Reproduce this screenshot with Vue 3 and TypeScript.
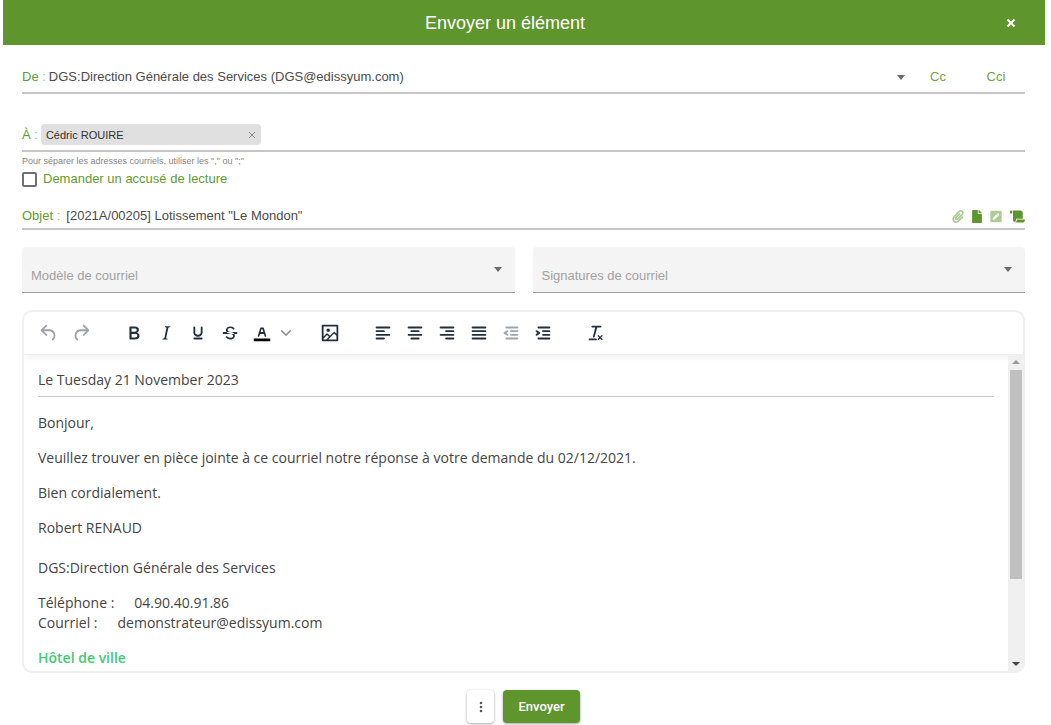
<script setup lang="ts">
import { ref } from 'vue'

interface Tool {
  name: string
  label: string
  path: string
  muted?: boolean
  split?: boolean
}

interface Template {
  id: string
  label: string
}

const bar = (y: number, x: number, end: number): string =>
  `M${x} ${y}H${end}a1 1 0 0 1 0 2H${x}a1 1 0 0 1 0-2Z`

const toolGroups: Tool[][] = [
  [
    {
      name: 'undo',
      label: 'Annuler',
      muted: true,
      path: 'M6.4 8H12c3.7 0 6.2 2 6.8 5.1.6 2.7-.4 5.6-2.3 6.8a1 1 0 0 1-1-1.8c1.1-.6 1.8-2.7 1.4-4.6-.5-2.1-2.1-3.5-4.9-3.5H6.4l3.3 3.3a1 1 0 1 1-1.4 1.4l-5-5a1 1 0 0 1 0-1.4l5-5a1 1 0 0 1 1.4 1.4L6.4 8Z',
    },
    {
      name: 'redo',
      label: 'Rétablir',
      muted: true,
      path: 'M17.6 10H12c-2.8 0-4.4 1.4-4.9 3.5-.4 2 .3 4 1.4 4.6a1 1 0 1 1-1 1.8c-2-1.2-2.9-4.1-2.3-6.8.6-3 3-5.1 6.8-5.1h5.6l-3.3-3.3a1 1 0 1 1 1.4-1.4l5 5a1 1 0 0 1 0 1.4l-5 5a1 1 0 0 1-1.4-1.4l3.3-3.3Z',
    },
  ],
  [
    {
      name: 'bold',
      label: 'Gras',
      path: 'M7.8 19c-.3 0-.5 0-.6-.2l-.2-.5V5.7c0-.2 0-.4.2-.5l.6-.2h5c1.5 0 2.7.3 3.5 1 .7.6 1.1 1.4 1.1 2.5a3 3 0 0 1-.6 1.9c-.4.6-1 1-1.6 1.2.4.1.9.3 1.3.6s.8.7 1 1.2c.4.4.5 1 .5 1.6 0 1.3-.4 2.3-1.3 3-.8.7-2.1 1-3.8 1H7.8Zm5-8.3c.6 0 1.2-.1 1.6-.5.4-.3.6-.7.6-1.3 0-1.1-.8-1.7-2.3-1.7H9.3v3.5h3.4Zm.5 6c.7 0 1.3-.1 1.7-.4.4-.4.6-.9.6-1.5s-.2-1-.7-1.4c-.4-.3-1-.4-2-.4H9.4v3.8h4Z',
    },
    {
      name: 'italic',
      label: 'Italique',
      path: 'm16.7 4.7-.1.9h-.3c-.6 0-1 0-1.4.3-.3.3-.4.6-.5 1.1l-2.1 9.8v.6c0 .5.4.8 1.4.8h.2l-.2.8H8l.2-.8h.2c1.1 0 1.8-.5 2-1.5l2-9.8.1-.5c0-.6-.4-.8-1.4-.8h-.3l.2-.9h5.8Z',
    },
    {
      name: 'underline',
      label: 'Souligné',
      path: 'M16 5c.6 0 1 .4 1 1v5.5a4 4 0 0 1-.4 1.8l-1 1.4a5.3 5.3 0 0 1-5.5 1 5 5 0 0 1-1.6-1c-.5-.4-.8-.9-1.1-1.4a4 4 0 0 1-.4-1.8V6c0-.6.4-1 1-1s1 .4 1 1v5.5c0 .3 0 .6.2 1l.6.7a3.3 3.3 0 0 0 2.2.8 3.4 3.4 0 0 0 2.2-.8c.3-.2.4-.5.6-.8l.2-.9V6c0-.6.4-1 1-1ZM8 17h8c.6 0 1 .4 1 1s-.4 1-1 1H8a1 1 0 0 1 0-2Z',
    },
    {
      name: 'strike',
      label: 'Barré',
      path: 'M15.6 8.5c-.5-.7-1-1.1-1.3-1.3-.6-.4-1.3-.6-2-.6-2.7 0-2.8 1.7-2.8 2.1 0 1.6 1.8 2 3.2 2.3 4.4.9 4.6 2.8 4.6 3.9 0 1.4-.7 4.1-5 4.1A6.2 6.2 0 0 1 7 16.4l1.5-1.1c.4.6 1.6 2 3.7 2 1.6 0 2.5-.4 3-1.2.4-.8.3-2-.8-2.6-.7-.4-1.6-.7-2.9-1-1-.2-3.9-.8-3.9-3.6C7.6 6 10.3 5 12.4 5c2.9 0 4.2 1.6 4.7 2.4l-1.5 1.1Z M5 11h14a1 1 0 0 1 0 2H5a1 1 0 0 1 0-2Z',
    },
    {
      name: 'color',
      label: 'Couleur du texte',
      split: true,
      path: 'M8.7 16h-.8a.5.5 0 0 1-.5-.6l2.7-9c.1-.3.3-.4.5-.4h2.8c.2 0 .4.1.5.4l2.7 9a.5.5 0 0 1-.5.6h-.8a.5.5 0 0 1-.4-.4l-.7-2.2c0-.3-.3-.4-.5-.4h-3.4c-.2 0-.4.1-.5.4l-.7 2.2c0 .3-.2.4-.4.4Zm2.6-7.6-.6 2a.5.5 0 0 0 .5.6h1.6a.5.5 0 0 0 .5-.6l-.6-2c0-.3-.3-.4-.5-.4h-.4c-.2 0-.4.1-.5.4Z',
    },
  ],
  [
    {
      name: 'image',
      label: 'Insérer une image',
      path: 'm5 15.7 3.3-3.2c.3-.3.7-.3 1 0L12 15l4.1-4c.3-.4.8-.4 1 0l2 1.9V5H5v10.7ZM5 18V19h3l2.8-2.9-2-2L5 17.9Zm14-3-2.5-2.4-6.4 6.5H19v-4ZM4 3h16c.6 0 1 .4 1 1v16c0 .6-.4 1-1 1H4a1 1 0 0 1-1-1V4c0-.6.4-1 1-1Zm6 8a2 2 0 1 0 0-4 2 2 0 0 0 0 4Z',
    },
  ],
  [
    { name: 'left', label: 'Aligner à gauche', path: bar(5, 5, 19) + bar(9, 5, 13) + bar(13, 5, 19) + bar(17, 5, 13) },
    { name: 'center', label: 'Centrer', path: bar(5, 5, 19) + bar(9, 8, 16) + bar(13, 5, 19) + bar(17, 8, 16) },
    { name: 'right', label: 'Aligner à droite', path: bar(5, 5, 19) + bar(9, 11, 19) + bar(13, 5, 19) + bar(17, 11, 19) },
    { name: 'justify', label: 'Justifier', path: bar(5, 5, 19) + bar(9, 5, 19) + bar(13, 5, 19) + bar(17, 5, 19) },
    {
      name: 'outdent',
      label: 'Diminuer le retrait',
      muted: true,
      path: bar(5, 7, 19) + bar(9, 12, 19) + bar(13, 12, 19) + bar(17, 7, 19) + 'M8.6 13.2a1 1 0 0 1-1.2 1.6l-3-2a1 1 0 0 1 0-1.6l3-2a1 1 0 0 1 1.2 1.6L6.8 12l1.8 1.2Z',
    },
    {
      name: 'indent',
      label: 'Augmenter le retrait',
      path: bar(5, 7, 19) + bar(9, 12, 19) + bar(13, 12, 19) + bar(17, 7, 19) + 'M4.4 13.2 6.2 12l-1.8-1.2a1 1 0 0 1 1.2-1.6l3 2a1 1 0 0 1 0 1.6l-3 2a1 1 0 1 1-1.2-1.6Z',
    },
  ],
  [
    {
      name: 'clear',
      label: 'Effacer la mise en forme',
      path: 'M13.2 6a1 1 0 0 1 0 .2l-2.6 10a1 1 0 0 1-1 .8h-.2a.8.8 0 0 1-.8-1l2.6-10H8a1 1 0 1 1 0-2h9a1 1 0 0 1 0 2h-3.8ZM5 18h7a1 1 0 0 1 0 2H5a1 1 0 0 1 0-2Zm13 1.5L16.5 18 15 19.5a.7.7 0 0 1-1-1l1.5-1.5-1.5-1.5a.7.7 0 0 1 1-1l1.5 1.5 1.5-1.5a.7.7 0 0 1 1 1L17.5 17l1.5 1.5a.7.7 0 0 1-1 1Z',
    },
  ],
]

const attachments = [
  {
    label: 'Joindre un fichier',
    box: '0 0 448 512',
    width: 12,
    muted: true,
    path: 'M43.246 466.142c-58.43-60.289-57.341-157.511 1.386-217.581L254.392 34c44.316-45.332 116.351-45.336 160.671 0 43.89 44.894 43.943 117.329 0 162.276L232.214 383.128c-29.855 30.537-78.633 30.111-107.982-.998-28.275-29.97-27.368-77.473 1.452-106.953l143.743-146.835c6.182-6.314 16.312-6.422 22.626-.241l22.861 22.379c6.315 6.182 6.422 16.312.241 22.626L171.427 319.927c-4.932 5.045-5.236 13.428-.648 18.292 4.372 4.634 11.245 4.711 15.688.165l182.849-186.851c19.613-20.062 19.613-52.725-.011-72.798-19.189-19.627-49.957-19.637-69.154 0L90.39 293.295c-34.763 35.56-35.299 93.12-1.191 128.313 34.01 35.093 88.985 35.137 123.058.286l172.06-175.999c6.177-6.319 16.307-6.433 22.626-.256l22.877 22.364c6.319 6.177 6.434 16.307.256 22.626l-172.06 175.998c-59.576 60.938-155.943 60.216-214.77-.485z',
  },
  {
    label: 'Document principal',
    box: '0 0 384 512',
    width: 10,
    muted: false,
    path: 'M224 136V0H24C10.7 0 0 10.7 0 24v464c0 13.3 10.7 24 24 24h336c13.3 0 24-10.7 24-24V160H248c-13.2 0-24-10.8-24-24zm160-14.1v6.1H256V0h6.1c6.4 0 12.5 2.5 17 7l97.9 98c4.5 4.5 7 10.6 7 16.9z',
  },
  {
    label: 'Notes',
    box: '0 0 448 512',
    width: 12,
    muted: true,
    path: 'M400 480H48c-26.5 0-48-21.5-48-48V80c0-26.5 21.5-48 48-48h352c26.5 0 48 21.5 48 48v352c0 26.5-21.5 48-48 48zM238.1 177.9L102.4 313.6l-6.3 57.1c-.8 7.6 5.6 14.1 13.3 13.3l57.1-6.3L302.2 242c2.3-2.3 2.3-6.1 0-8.5L246.7 178c-2.5-2.4-6.3-2.4-8.6-.1zM345 165.1L314.9 135c-9.4-9.4-24.6-9.4-33.9 0l-23.1 23.1c-2.3 2.3-2.3 6.1 0 8.5l55.5 55.5c2.3 2.3 6.1 2.3 8.5 0L345 199c9.3-9.3 9.3-24.5 0-33.9z',
  },
  {
    label: 'Bordereau',
    box: '0 0 640 512',
    width: 15,
    muted: false,
    path: 'M48 0C21.53 0 0 21.53 0 48v64c0 8.84 7.16 16 16 16h80V48C96 21.53 74.47 0 48 0zm208 412.57V352h288V96c0-52.94-43.06-96-96-96H111.59C121.74 13.41 128 29.92 128 48v368c0 38.87 34.65 69.65 74.75 63.12C234.22 474 256 444.46 256 412.57zM288 384v32c0 52.93-43.06 96-96 96h336c61.86 0 112-50.14 112-112 0-8.84-7.16-16-16-16H288z',
  },
]

const templates: Template[] = [
  { id: 'model', label: 'Modèle de courriel' },
  { id: 'signature', label: 'Signatures de courriel' },
]

const recipients = ref<string[]>(['Cédric ROUIRE'])
const subject = ref('[2021A/00205] Lotissement "Le Mondon"')
const receipt = ref(false)

const removeRecipient = (index: number): void => {
  recipients.value.splice(index, 1)
}
</script>

<template>
  <main class="dialog">
    <header class="title-bar">
      <h1>Envoyer un élément</h1>
      <button type="button" class="close" aria-label="Fermer">
        <svg viewBox="0 0 10 10" width="10" height="10"><path d="M1.5 1.5l7 7M8.5 1.5l-7 7" /></svg>
      </button>
    </header>

    <form class="content" @submit.prevent>
      <div class="field from">
        <label for="sender">De<span class="colon"> :</span></label>
        <select id="sender">
          <option>DGS:Direction Générale des Services (DGS@edissyum.com)</option>
        </select>
        <svg class="arrow" viewBox="0 0 10 5" width="10" height="5"><path d="M1 0h8L5 5z" /></svg>
        <button type="button" class="copy">Cc</button>
        <button type="button" class="copy">Cci</button>
      </div>

      <div class="field to">
        <label for="recipient">À<span class="colon"> :</span></label>
        <span v-for="(name, i) in recipients" :key="name" class="chip">
          {{ name }}
          <button type="button" :aria-label="`Retirer ${name}`" @click="removeRecipient(i)">
            <svg viewBox="0 0 8 8" width="8" height="8"><path d="M1 1l6 6M7 1 1 7" /></svg>
          </button>
        </span>
        <input id="recipient" type="text" />
      </div>
      <p class="hint">Pour séparer les adresses courriels, utiliser les "," ou ";"</p>

      <label class="receipt">
        <input v-model="receipt" type="checkbox" />
        Demander un accusé de lecture
      </label>

      <div class="field subject">
        <label for="subject">Objet<span class="colon"> :</span></label>
        <input id="subject" v-model="subject" type="text" />
        <div class="attachments">
          <button v-for="a in attachments" :key="a.label" type="button" :aria-label="a.label" :class="{ muted: a.muted }">
            <svg :viewBox="a.box" :width="a.width" height="13"><path :d="a.path" /></svg>
          </button>
        </div>
      </div>

      <div class="templates">
        <div v-for="t in templates" :key="t.id" class="template">
          <select :id="t.id" :aria-label="t.label">
            <option>{{ t.label }}</option>
          </select>
          <svg class="arrow" viewBox="0 0 10 5" width="10" height="5"><path d="M1 0h8L5 5z" /></svg>
        </div>
      </div>

      <section class="editor">
        <div class="toolbar" role="toolbar" aria-label="Mise en forme">
          <div v-for="(group, g) in toolGroups" :key="g" class="group">
            <template v-for="tool in group" :key="tool.name">
              <button type="button" class="tool" :class="{ muted: tool.muted }" :aria-label="tool.label">
                <svg viewBox="0 0 24 24" width="22" height="22">
                  <path :d="tool.path" fill-rule="evenodd" />
                  <path v-if="tool.split" class="swatch" d="M3 18h18v3H3z" />
                </svg>
              </button>
              <button v-if="tool.split" type="button" class="more-colors" aria-label="Choisir une couleur">
                <svg viewBox="0 0 10 10" width="10" height="10">
                  <path d="M8.7 2.2c.3-.3.8-.3 1 0 .4.4.4.9 0 1.2L5.7 7.8c-.3.3-.9.3-1.2 0L.2 3.4a.8.8 0 0 1 0-1.2c.3-.3.8-.3 1.1 0L5 6l3.7-3.8Z" />
                </svg>
              </button>
            </template>
          </div>
        </div>

        <div class="workspace">
          <article class="letter" contenteditable="true" spellcheck="false" role="textbox" aria-multiline="true" aria-label="Message">
            <p class="date">Le Tuesday 21 November 2023</p>
            <hr />
            <p>Bonjour,</p>
            <p>Veuillez trouver en pièce jointe à ce courriel notre réponse à votre demande du 02/12/2021.</p>
            <p>Bien cordialement.</p>
            <p class="signer">Robert RENAUD</p>
            <p>DGS:Direction Générale des Services</p>
            <p>
              Téléphone :<span class="value">04.90.40.91.86</span><br />
              Courriel :<span class="value">demonstrateur@edissyum.com</span>
            </p>
            <p class="place">Hôtel de ville</p>
          </article>
          <div class="scrollbar" aria-hidden="true">
            <svg class="up" viewBox="0 0 8 4" width="8" height="4"><path d="M0 4h8L4 0z" /></svg>
            <div class="track"><div class="thumb"></div></div>
            <svg class="down" viewBox="0 0 8 4" width="8" height="4"><path d="M0 0h8L4 4z" /></svg>
          </div>
        </div>
      </section>

      <footer class="actions">
        <button type="button" class="menu" aria-label="Plus d'options">
          <svg viewBox="0 0 4 12" width="4" height="12">
            <circle cx="2" cy="2" r="1.3" /><circle cx="2" cy="6" r="1.3" /><circle cx="2" cy="10" r="1.3" />
          </svg>
        </button>
        <button type="submit" class="send">Envoyer</button>
      </footer>
    </form>
  </main>
</template>

<style>
body {
  background: #fff;
}
</style>

<style scoped>
* {
  box-sizing: border-box;
}

.dialog {
  display: flex;
  flex-direction: column;
  height: 100vh;
  min-height: 560px;
  overflow: hidden;
  font: 13px/20px "Liberation Sans", Arial, sans-serif;
  color: #4a4a4a;
}

button,
input,
select {
  font: inherit;
  color: inherit;
  border: 0;
  padding: 0;
  margin: 0;
  background: none;
  outline: 0;
}

button {
  cursor: pointer;
}

svg {
  display: block;
  fill: currentColor;
}

.title-bar {
  display: grid;
  grid-template-columns: 80px 1fr 80px;
  align-items: center;
  flex: none;
  height: 45px;
  margin: 0 6px 0 3px;
  background: #5e962d;
  color: #fff;
}

.title-bar h1 {
  grid-column: 2;
  margin: 0;
  padding-right: 38px;
  text-align: center;
  font-size: 18px;
  line-height: 24px;
  font-weight: 400;
}

.close {
  justify-self: end;
  margin-right: 29px;
}

.close path {
  fill: none;
  stroke: #fff;
  stroke-width: 2;
}

.content {
  display: flex;
  flex-direction: column;
  flex: 1;
  min-height: 0;
  padding: 0 26px 2px 22px;
}

.field {
  display: flex;
  align-items: center;
  flex: none;
  border-bottom: 2px solid #c6c6c6;
}

.field label {
  flex: none;
  color: #5e9c32;
  white-space: pre;
}

.colon {
  color: #9cc47c;
}

.field input,
.field select {
  flex: 1;
  min-width: 0;
  height: 20px;
}

select {
  appearance: none;
}

.arrow {
  flex: none;
  color: #6c6c6c;
}

.from {
  height: 32px;
  margin-top: 17px;
}

.from select {
  margin-left: 3px;
}

.copy {
  width: 58px;
  color: #6ba441;
}

.from .arrow {
  margin-right: 3px;
}

.to {
  height: 33px;
  margin-top: 25px;
}

.chip {
  display: flex;
  align-items: center;
  justify-content: space-between;
  flex: 0 0 220px;
  height: 21px;
  margin-left: 3px;
  padding: 0 5px;
  border-radius: 4px;
  background: #e0e0e0;
  color: #303030;
  font-size: 11px;
}

.chip path {
  fill: none;
  stroke: #888;
}

.hint {
  flex: none;
  margin: 2px 0 0;
  font-size: 9px;
  line-height: 15px;
  color: #858585;
}

.receipt {
  display: flex;
  align-items: center;
  align-self: flex-start;
  flex: none;
  gap: 6px;
  color: #5e9c32;
}

.receipt input {
  appearance: none;
  width: 15px;
  height: 15px;
  border: 2px solid #707070;
  border-radius: 2px;
}

.receipt input:checked {
  background: #5e962d;
}

.subject {
  height: 26px;
  margin-top: 15px;
}

.subject input {
  margin-left: 6px;
}

.attachments {
  display: flex;
  align-items: center;
  gap: 8px;
  color: #5e962d;
}

.attachments .muted {
  color: #adcb95;
}

.templates {
  display: grid;
  grid-template-columns: 1fr 1fr;
  gap: 18px;
  flex: none;
  margin-top: 17px;
}

.template {
  display: flex;
  align-items: center;
  height: 46px;
  padding: 0 12px 0 9px;
  border-bottom: 1px solid #a0a0a0;
  border-radius: 4px 4px 0 0;
  background: #f4f4f4;
}

.template select {
  flex: 1;
  min-width: 0;
  height: 45px;
  padding-top: 12px;
  color: #a2a2a2;
}

.editor {
  display: flex;
  flex-direction: column;
  flex: 1;
  min-height: 0;
  margin-top: 17px;
  border: 2px solid #f0f0f0;
  border-radius: 10px;
  overflow: hidden;
}

.toolbar {
  display: flex;
  flex: none;
  gap: 21px;
  padding: 5px 9px;
  border-bottom: 1px solid #eee;
  box-shadow: 0 2px 6px rgba(34, 47, 62, 0.08);
  color: #222f3e;
}

.group {
  display: flex;
}

.tool {
  display: grid;
  place-items: center;
  width: 32px;
  height: 32px;
}

.tool.muted {
  color: #9da3aa;
}

.swatch {
  fill: #000;
}

.more-colors {
  display: grid;
  place-items: center;
  width: 15px;
  color: #8e959c;
}

.workspace {
  display: flex;
  flex: 1;
  min-height: 0;
}

.letter {
  flex: 1;
  min-width: 0;
  padding: 15px 14px 0;
  overflow: hidden;
  outline: 0;
  font: 14px/20px "Open Sans", "Noto Sans", sans-serif;
  color: #444;
}

.letter p {
  margin: 0 0 15px;
}

.letter .date {
  margin-bottom: 6px;
}

.letter hr {
  margin: 0 0 16px;
  border: 0;
  border-top: 1px solid #ccc;
}

.letter .signer {
  margin-bottom: 20px;
}

.value {
  margin-left: 20px;
}

.letter .place {
  color: #43c973;
  font-weight: 600;
}

.scrollbar {
  display: flex;
  flex-direction: column;
  align-items: center;
  gap: 6px;
  width: 15px;
  padding: 5px 1px 5px 2px;
  background: #f0f0f0;
}

.up {
  color: #9a9a9a;
}

.down {
  color: #444;
}

.track {
  flex: 1;
  align-self: stretch;
}

.thumb {
  height: 73%;
  background: #c0c0c0;
}

.actions {
  display: flex;
  justify-content: center;
  flex: none;
  gap: 9px;
  padding: 17px 0 0;
}

.actions button {
  height: 33px;
  border-radius: 4px;
  box-shadow: 0 1px 3px rgba(0, 0, 0, 0.35);
}

.menu {
  display: grid;
  place-items: center;
  width: 27px;
  color: #555;
}

.send {
  width: 77px;
  background: #5e962d;
  color: #fff;
  font-family: Roboto, "Liberation Sans", sans-serif;
  font-weight: 500;
}
</style>
